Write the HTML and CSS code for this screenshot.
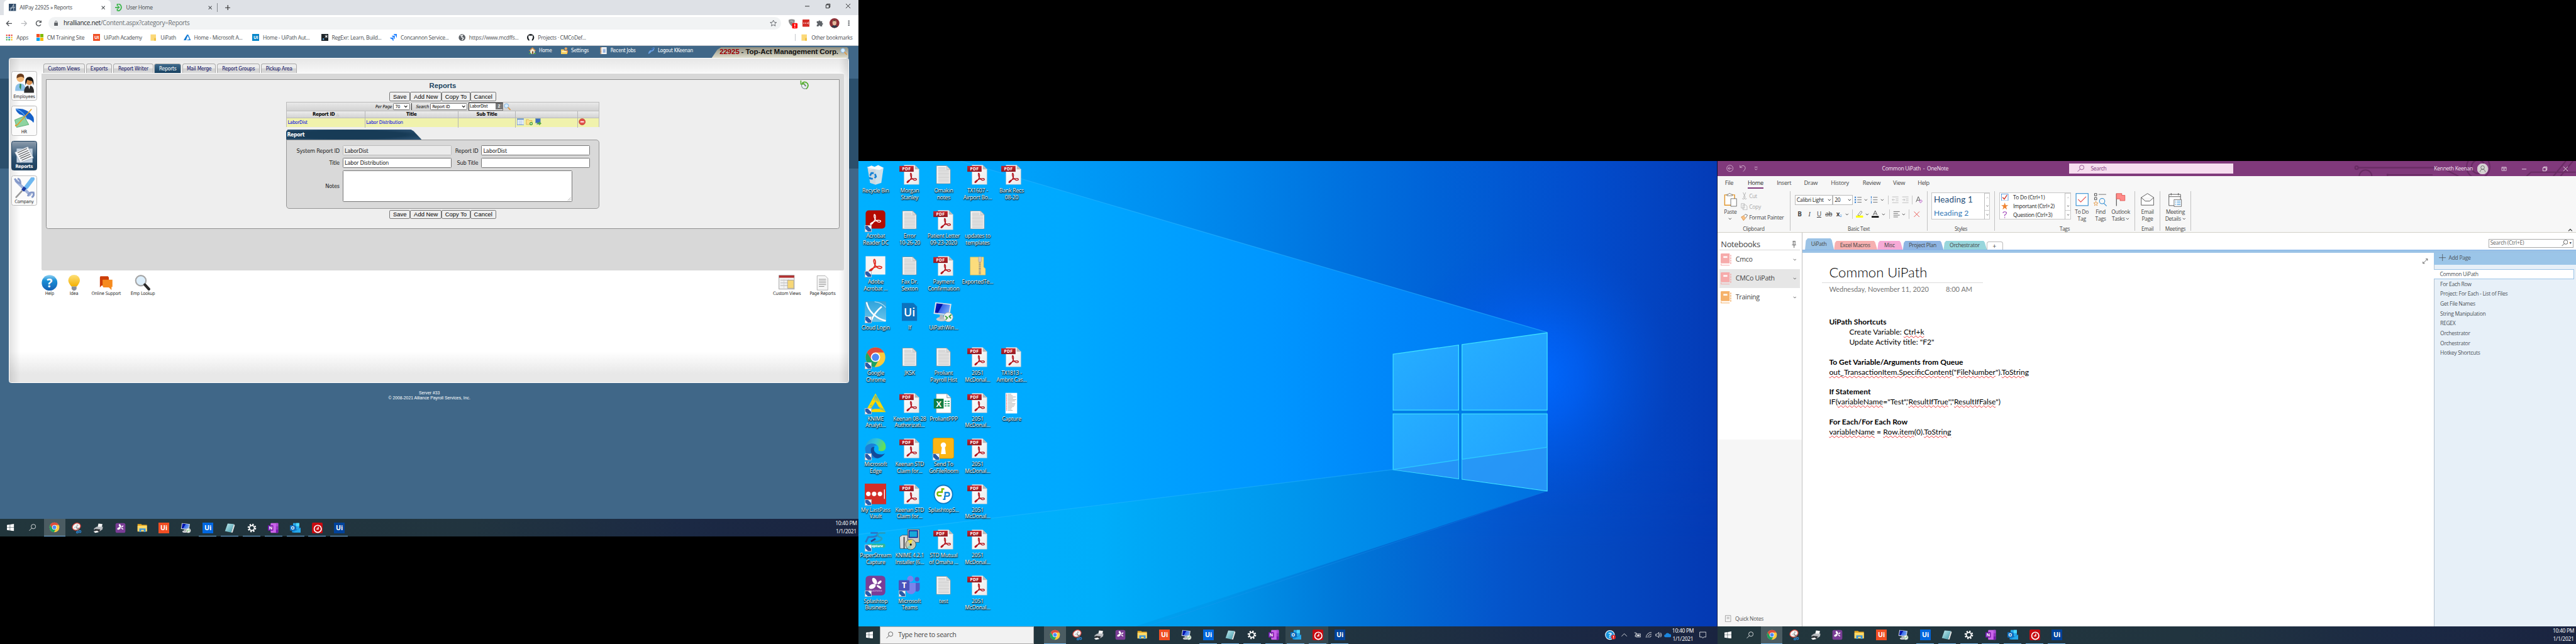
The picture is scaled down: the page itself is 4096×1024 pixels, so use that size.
FILE: index.html
```html
<!DOCTYPE html>
<html lang="en">
<head>
<meta charset="utf-8">
<title>Desktop</title>
<link rel="stylesheet" href="styles.css">
</head>
<body>
<svg class="defs" aria-hidden="true">
<defs>
<linearGradient id="gRed" x2="0" y2="1"><stop offset="0" stop-color="#c9252d"/><stop offset="1" stop-color="#8e1a22"/></linearGradient>
<linearGradient id="gPaper" x2="1" y2="1"><stop offset="0" stop-color="#fff"/><stop offset="1" stop-color="#e9e9e9"/></linearGradient>
<linearGradient id="gScreen" x2="1" y2=".4"><stop offset="0" stop-color="#0a20c8"/><stop offset=".45" stop-color="#0010a0"/><stop offset=".5" stop-color="#3a68e8"/><stop offset="1" stop-color="#6fa0f4"/></linearGradient>
<linearGradient id="gHelp" x2="0" y2="1"><stop offset="0" stop-color="#8fd0f2"/><stop offset=".35" stop-color="#1a8fd6"/><stop offset="1" stop-color="#1560b4"/></linearGradient>
<linearGradient id="gBulb" x2="0" y2="1"><stop offset="0" stop-color="#fde07a"/><stop offset="1" stop-color="#f4b000"/></linearGradient>
<linearGradient id="gEdge" x2="1" y2=".3"><stop offset="0" stop-color="#1a9fe0"/><stop offset=".55" stop-color="#33c3d8"/><stop offset="1" stop-color="#62e05a"/></linearGradient>
<linearGradient id="gX" x2="0" y2="1"><stop offset="0" stop-color="#2fa3dc"/><stop offset="1" stop-color="#6cc4ea"/></linearGradient>
<linearGradient id="gNote" x2="1" y2="1"><stop offset="0" stop-color="#c4ecf0"/><stop offset="1" stop-color="#3f98a8"/></linearGradient>
</defs>
</svg>
<svg class="symbols" aria-hidden="true">
<symbol id="win" viewBox="0 0 16 16"><path d="M0 2.3 6.5 1.4V7.6H0zM7.3 1.3 16 0V7.6H7.3zM0 8.4H6.5V14.6L0 13.7zM7.3 8.4H16V16L7.3 14.7z" fill="#fff"/></symbol>
<symbol id="mag" viewBox="0 0 16 16"><circle cx="10" cy="6" r="5" fill="none" stroke="currentColor" stroke-width="1.1"/><path d="M6.4 9.6 .8 15.2" stroke="currentColor" stroke-width="1.2"/></symbol>
<symbol id="magc" viewBox="0 0 16 16"><circle cx="6" cy="6" r="4.8" fill="#d6ecfb" stroke="#7fb0e0" stroke-width="1.4"/><path d="M10 10 14.4 15" stroke="#d99a4e" stroke-width="2.6" stroke-linecap="round"/></symbol>
<symbol id="chrome" viewBox="0 0 48 48"><circle cx="24" cy="24" r="22" fill="#fccb3c"/><path d="M5 13A22 22 0 0 0 22 46L32 29 24 24 15 29z" fill="#1da362"/><path d="M24 13.500H43.400A22 22 0 0 0 5 13L14.800 29z" fill="#dd4b3e"/><circle cx="24" cy="24" r="10.500" fill="#fff"/><circle cx="24" cy="24" r="8.200" fill="#4c8bf5"/></symbol>
<symbol id="snip" viewBox="0 0 24 24"><ellipse cx="12" cy="9" rx="9.500" ry="7.500" transform="rotate(-28 12 9)" fill="#f4f4f4" stroke="#d8443c" stroke-width="1.800"/><path d="M7 12 17 5M14 3 12 14" stroke="#999" stroke-width="1"/><path d="M12 10 19 19M17 11 14 20" stroke="#777" stroke-width="1.500"/><circle cx="20" cy="20" r="2.200" fill="none" stroke="#2a86d8" stroke-width="1.700"/><circle cx="14" cy="21.500" r="2" fill="none" stroke="#2a86d8" stroke-width="1.700"/></symbol>
<symbol id="printer" viewBox="0 0 24 24"><path d="M12 2 21 3 19 12 10 11z" fill="#f5f5f5"/><path d="M2 13 8 9H22L21 15 14 20H3z" fill="#b9bcc0"/><path d="M4 14 16 15 14 21 2 19z" fill="#2f3236"/><path d="M1 20 9 18 13 21 5 23z" fill="#fff"/></symbol>
<symbol id="splash" viewBox="0 0 48 48"><rect x="2" y="2" width="44" height="44" rx="8" fill="#7a3d96"/><g fill="#fff"><ellipse cx="22" cy="14" rx="4.500" ry="8" transform="rotate(-30 22 14)"/><ellipse cx="33" cy="17" rx="5.500" ry="2.600" transform="rotate(-40 33 17)"/><ellipse cx="17" cy="26" rx="8" ry="5" transform="rotate(-25 17 26)"/><ellipse cx="32" cy="27" rx="6" ry="2.400" transform="rotate(35 32 27)"/></g></symbol>
<symbol id="folder" viewBox="0 0 24 24"><path d="M1 3H9L11 5H22V19H1z" fill="#e8a820"/><path d="M1 7H22V20H1z" fill="#ffd968"/><path d="M5 21V13H19V21H15V16H9V21z" fill="#3b94d9"/></symbol>
<symbol id="rdp" viewBox="0 0 48 48"><path d="M6 2 42 6 38 32 2 28z" fill="#dfe3e8"/><path d="M8.500 4.500 39 8 35.500 29 5 25.500z" fill="url(#gScreen)"/><ellipse cx="20" cy="40" rx="12" ry="5" fill="#c9ccd0"/><path d="M16 30 24 31 23 40H15z" fill="#b5b8bc"/><circle cx="35" cy="35.500" r="10.500" fill="#eef0ee" stroke="#9a9a9a"/><path d="M28 33 33 37 29 41.500M42 30 37 34 41 38.500" stroke="#3da23a" stroke-width="2.600" fill="none"/></symbol>
<symbol id="uio" viewBox="0 0 24 24"><rect width="24" height="24" fill="#f04e23"/><text x="12" y="17.500" class="ui-mark">Ui</text></symbol>
<symbol id="uib" viewBox="0 0 24 24"><rect width="24" height="24" fill="#0067df"/><text x="12" y="17.500" class="ui-mark">Ui</text></symbol>
<symbol id="uid" viewBox="0 0 24 24"><rect width="24" height="24" fill="#00429a"/><text x="12" y="17.500" class="ui-mark">Ui</text></symbol>
<symbol id="uic" viewBox="0 0 24 24"><rect width="24" height="24" fill="#0585c8"/><text x="12" y="17.500" class="ui-mark">Ui</text></symbol>
<symbol id="uif" viewBox="0 0 48 48"><path d="M7 4H33L41 12V44H7z" fill="#0c72bd"/><text x="24" y="34" class="ui-mark big-mark">Ui</text></symbol>
<symbol id="notepad" viewBox="0 0 24 24"><path d="M7 2 21 3 15 22 1 19z" fill="url(#gNote)"/><path d="M21 3 23 6 18 22 15 22z" fill="#e8e8e8"/></symbol>
<symbol id="gear" viewBox="0 0 24 24"><circle cx="12" cy="12" r="5.500" fill="none" stroke="#fff" stroke-width="2.400"/><circle cx="12" cy="12" r="8" fill="none" stroke="#fff" stroke-width="3.200" stroke-dasharray="3.200 3.080"/></symbol>
<symbol id="onenote" viewBox="0 0 24 24"><rect x="6" y="1" width="17" height="22" rx="1.500" fill="#ca64ea"/><path d="M18 1H23V8H18z" fill="#ae4bd5"/><path d="M18 8H23V15H18z" fill="#9332bf"/><path d="M18 15H23V23H18z" fill="#7719aa"/><rect y="6" width="12" height="12" rx="1" fill="#7719aa"/><text x="6" y="15.300" class="letter">N</text></symbol>
<symbol id="outlook" viewBox="0 0 24 24"><rect x="7" y="1" width="14" height="15" fill="#28a8ea"/><path d="M14 1H21V8H14z" fill="#50d9ff"/><path d="M7 8H14V16H7z" fill="#0364b8"/><path d="M4 11 14 17 24 11V22H5z" fill="#1490df"/><path d="M24 12V22H7z" fill="#28a8ea"/><rect y="6" width="12" height="12" rx="1" fill="#0f6cbd"/><text x="6" y="15.300" class="letter">O</text></symbol>
<symbol id="redclock" viewBox="0 0 24 24"><rect width="24" height="24" rx="3" fill="#c80a10"/><circle cx="13" cy="14" r="8" fill="none" stroke="#fff" stroke-width="2.400"/><path d="M14 9V14.500H10" stroke="#fff" stroke-width="2" fill="none"/></symbol>
<symbol id="curl" viewBox="0 0 48 48"><path d="M6 40C18 36 27 20 23 8C20 1 16 9 22 21C27 31 37 35 42 31C46 26 34 24 22 29C12 33 4 38 6 41C9 44 17 34 22 24" fill="none" stroke="currentColor" stroke-width="3.200"/></symbol>
<symbol id="pdf" viewBox="0 0 48 48"><path d="M12 2H36L45.500 11.500V45.500H12z" fill="url(#gPaper)" stroke="#b9c4cc" stroke-width=".6"/><path d="M36 2V11.500H45.500z" fill="#b8b8b8"/><rect x="1.500" y="4" width="32" height="13" fill="url(#gRed)"/><text x="17.500" y="14.200" class="pdf-mark">PDF</text><use href="#curl" x="15" y="17" width="28" height="28" color="#b3141d"/></symbol>
<symbol id="txt" viewBox="0 0 48 48"><path d="M8.500 3.500H31L39.500 12V43.500H8.500z" fill="#f8f8f8" stroke="#8a8a8a"/><path d="M31 3.500V12H39.500z" fill="#dcdcdc" stroke="#999" stroke-width=".7"/><path d="M12 8H29M12 11H29M12 14.200H37M12 17.400H37M12 20.600H37M12 23.800H37M12 27H37M12 30.200H37M12 33.400H37M12 36.600H37M12 39.800H37" stroke="#a4a4a4" stroke-width="1.100"/></symbol>
<symbol id="recycle" viewBox="0 0 48 48"><path d="M6 6 42 8 37 42 24 46 12 42z" fill="#dfe5e9" opacity=".93"/><path d="M6 7 15 3 22 6 30 2 42 8 33 13 20 11 12 13z" fill="#fbfbfb"/><path d="M24 12 24 45 12 42 6 7z" fill="#c3ccd2" opacity=".45"/><g fill="none" stroke="#1583d6" stroke-width="4"><path d="M12 26 15 20 20 20M23 22 25 28 22 31M18 33 12 32 11 29"/></g></symbol>
<symbol id="acro" viewBox="0 0 48 48"><rect x="2" y="2" width="44" height="41" rx="7" fill="#b30b00"/><use href="#curl" x="9" y="8" width="30" height="30" color="#fff"/></symbol>
<symbol id="adobe" viewBox="0 0 48 48"><rect x="2" y="2" width="44" height="41" fill="#f5f5f5"/><use href="#curl" x="6" y="5" width="36" height="36" color="#e02a20"/></symbol>
<symbol id="cloudx" viewBox="0 0 48 48"><rect width="48" height="46" rx="3" fill="url(#gX)"/><path d="M4 2C8 22 24 38 47 44M38 12C28 20 20 30 14 44" fill="none" stroke="#fff" stroke-width="3.500"/><path d="M22 1C34 2 42 8 47 14" fill="none" stroke="#bfe4f6" stroke-width="1.500"/></symbol>
<symbol id="knime" viewBox="0 0 48 48"><path d="M24 2 47 44H1z" fill="#fdd800"/><path d="M24 6 20 18M24 8 24 19M25 8 28 20M26 8 32 22M28 34 46 42M27 31 43 38M12 40 22 36M8 42 18 30M12 30 16 28" stroke="#4fb0b0" stroke-width="1.300"/><path d="M24 20 34 37H14z" fill="#18b0f4"/></symbol>
<symbol id="edge" viewBox="0 0 48 48"><path d="M1 22C3 8 14 0 26 1C40 2 48 12 47 22C46 30 36 32 30 28C33 24 30 15 22 14C12 13 4 18 1 22z" fill="url(#gEdge)"/><path d="M1 22C6 12 22 10 27 18C18 16 15 24 19 32C22 40 32 42 40 38C34 46 22 49 12 43C3 38 0 30 1 22z" fill="#1c7fd6"/><path d="M14 25C12 34 18 44 28 46C36 45 42 40 45 35C38 39 28 38 23 32C20 29 20 24 22 20C17 20 15 22 14 25z" fill="#124a98"/></symbol>
<symbol id="lastpass" viewBox="0 0 48 48"><rect width="48" height="46" fill="#d32d27"/><circle cx="8" cy="23" r="5" fill="#fff"/><circle cx="21" cy="23" r="5" fill="#fff"/><circle cx="34" cy="23" r="5" fill="#fff"/><path d="M44 13V34" stroke="#fff" stroke-width="1.800"/></symbol>
<symbol id="paper" viewBox="0 0 48 48"><path d="M13 9H28C31 15 24 18 14 18H8L2 30" fill="none" stroke="#2c77c8" stroke-width="4"/><path d="M46 9H34C26 10 28 18 36 19C42 22 34 29 20 29" fill="none" stroke="#2a9bbb" stroke-width="3.500"/><path d="M14 28 24 22" stroke="#31408c" stroke-width="4"/><rect x="6" y="33" width="40" height="9" rx="4" fill="#2fb79a"/><text x="28" y="40.500" class="cap-mark">apture</text></symbol>
<symbol id="splash2" viewBox="0 0 48 48"><use href="#splash"/><text x="24" y="38" class="cap-mark biz">business</text></symbol>
<symbol id="excel" viewBox="0 0 48 48"><path d="M8 3H32L41 12V46H8z" fill="#fff" stroke="#888" stroke-width=".8"/><path d="M32 3V12H41" fill="#eee" stroke="#777"/><rect x="2.500" y="14" width="22" height="22" fill="#107c41"/><text x="13.500" y="32" class="xl-mark">X</text><path d="M27 20H31M33 20H38M27 25H31M33 25H38M27 30H31M33 30H38" stroke="#21a366" stroke-width="2.500"/></symbol>
<symbol id="keyhole" viewBox="0 0 48 48"><rect x=".5" y=".5" width="47" height="46" rx="5" fill="#fdb515" stroke="#c98700"/><circle cx="24" cy="16.500" r="6" fill="#fff"/><path d="M21 18H27L29.500 36.500H18.500z" fill="#fff"/></symbol>
<symbol id="sps" viewBox="0 0 48 48"><circle cx="24" cy="24" r="20.500" fill="#fff" stroke="#0e78c0" stroke-width="2.500"/><g fill="none" stroke-width="3.400"><path d="M26 12H21V19H13C9 20 10 28 14 27H20" stroke="#7ab800"/><path d="M23 35H27V28H34C39 27 38 20 34 20H28V26" stroke="#1a87d8"/></g></symbol>
<symbol id="inst" viewBox="0 0 48 48"><path d="M20 1H46V30H38L20 24z" fill="#c8c8c8" stroke="#222" stroke-width=".8"/><rect x="23" y="4" width="19" height="15" fill="#18a8d8" stroke="#0a1a90" stroke-width="2"/><path d="M2 18 8 14H20V44H3z" fill="#dadada" stroke="#222" stroke-width=".8"/><path d="M12 18V44" stroke="#222" stroke-width="2"/><circle cx="27" cy="35" r="11.500" fill="#c9c9b0" stroke="#333"/><path d="M27 35 20 26 31 24z" fill="#f0e040"/><path d="M27 35 18 42 26 46z" fill="#7fd0c8"/><circle cx="27" cy="35" r="2.200" fill="#111"/></symbol>
<symbol id="teams" viewBox="0 0 48 48"><circle cx="26" cy="9" r="7" fill="#7b83eb"/><circle cx="41" cy="10" r="5" fill="#5059c9"/><path d="M35 18H47V32C46 38 40 39 36 36z" fill="#5059c9"/><path d="M16 18H38V34C36 46 20 46 17 36z" fill="#7b83eb"/><rect x="0" y="12" width="24" height="23" rx="2" fill="#4b53bc"/><text x="12" y="30" class="tm-mark">T</text></symbol>
<symbol id="capture" viewBox="0 0 48 48"><rect x="11" y="1" width="26" height="46" fill="#fff"/><path d="M16 4H24M16 7H27M16 10H34M16 13H28M16 16H35M16 19H32M16 22H26M16 25H33M16 28H32M16 31H30M16 34H26M16 37H24M16 40H27" stroke="#999" stroke-width="1.100"/><path d="M13.500 3V42" stroke="#d33" stroke-width="1.500" stroke-dasharray="1.600 1.400"/></symbol>
<symbol id="zip" viewBox="0 0 48 48"><path d="M8 4H38V26L42 30V44H8z" fill="#fcdc7c" stroke="#e5bd4e" stroke-width=".8"/><path d="M29.500 4V44" stroke="#888" stroke-width="4.500" stroke-dasharray="1.200 1"/><rect x="26.500" y="3" width="6.500" height="12" rx="2" fill="#c9c9c9" stroke="#888" stroke-width=".6"/></symbol>
<symbol id="book" viewBox="0 0 24 28"><path d="M2 0H20V22H2Q0 22 0 20V2Q0 0 2 0z" fill="currentColor"/><path d="M1 23V26.500H20" fill="none" stroke="currentColor" stroke-width="1.500"/><rect x="6" y="6" width="9" height="4" fill="#fff" opacity=".9"/><path d="M22.500 3V24" stroke="currentColor" stroke-width="2" stroke-dasharray="4 1.500"/></symbol>
<symbol id="chev" viewBox="0 0 8 8"><path d="M1 2.500 4 5.500 7 2.500" fill="none" stroke="currentColor" stroke-width="1.300"/></symbol>
<symbol id="bfold" viewBox="0 0 16 16"><path d="M2 1H14V15H2z" fill="#fbd878"/><path d="M10 9H14V15H10z" fill="#f0c040"/></symbol>
<symbol id="globe" viewBox="0 0 16 16"><circle cx="8" cy="8" r="7.500" fill="#5f6368"/><path d="M4 4 9 3 7 7 11 9 8 14" stroke="#fff" stroke-width="1.800" fill="none"/></symbol>
</svg>

<main class="screens">

<section class="monitor left">
  <div class="tabstrip">
    <div class="tab active"><svg class="i16" viewBox="0 0 16 16"><rect width="16" height="16" fill="#2f4a68"/><path d="M3 15 11 1V15M2 10 14 8" stroke="#cdd7e2" stroke-width="1.300" fill="none"/></svg><span>AllPay 22925 » Reports</span><svg class="x" viewBox="0 0 10 10"><path d="M1 1 9 9M9 1 1 9"/></svg></div>
    <div class="tab"><svg class="i16" viewBox="0 0 16 16"><path d="M6 0A8 8 0 0 1 6 16M5 0V5M5 11V16" fill="none" stroke="#3bb54a" stroke-width="2.500"/><path d="M0 7H6V4L11 8 6 12V9.500H0z" fill="#3bb54a"/></svg><span>User Home</span><svg class="x" viewBox="0 0 10 10"><path d="M1 1 9 9M9 1 1 9"/></svg></div>
    <svg class="plus" viewBox="0 0 12 12"><path d="M6 0V12M0 6H12"/></svg>
    <div class="winctl">
      <svg viewBox="0 0 10 10"><path d="M0 5.500H10"/></svg>
      <svg viewBox="0 0 10 10"><path d="M.5 2.500H7.500V9.500H.5zM2.500 2.500V.5H9.500V7.500H7.500"/></svg>
      <svg viewBox="0 0 10 10"><path d="M0 0 10 10M10 0 0 10"/></svg>
    </div>
  </div>
  <div class="toolbar">
    <svg class="nav" viewBox="0 0 16 16"><path d="M15 8H2M8 2 2 8 8 14"/></svg>
    <svg class="nav faint" viewBox="0 0 16 16"><path d="M1 8H14M8 2 14 8 8 14"/></svg>
    <svg class="nav" viewBox="0 0 16 16"><path d="M13.500 10.500A6 6 0 1 1 13 4M14 1V5.500H9.500"/></svg>
    <div class="omni"><svg class="lock" viewBox="0 0 10 14"><rect y="5" width="10" height="8.500" rx="1" fill="#5f6368"/><path d="M2.500 5V3A2.500 2.500 0 0 1 7.500 3V5" fill="none" stroke="#5f6368" stroke-width="1.500"/></svg><span class="url">hralliance.net<i>/Content.aspx?category=Reports</i></span><svg class="i16 star" viewBox="0 0 16 16"><path d="M8 1.500 10 6 15 6.500 11.200 9.800 12.400 14.500 8 12 3.600 14.500 4.800 9.800 1 6.500 6 6z" fill="none" stroke="#5f6368" stroke-width="1.300"/></svg></div>
    <svg class="ext" viewBox="0 0 22 22"><path d="M4 4Q11 0 18 4Q18 14 11 18Q4 12 4 4z" fill="#8d8d8d"/><path d="M8 7Q12 5 14 8V13" stroke="#ddd" fill="none"/><rect x="12" y="11" width="12" height="12" rx="2" fill="#f00"/><path d="M18 13V18M18 19.500V21" stroke="#fff" stroke-width="2"/></svg>
    <svg class="i16" viewBox="0 0 16 16"><rect width="16" height="16" rx="1" fill="#d32d27"/><path d="M2 8H4M6 8H8M10 8H12" stroke="#fff" stroke-width="2"/><path d="M13.500 5V11" stroke="#fff"/></svg>
    <svg class="i16" viewBox="0 0 16 16"><path d="M1 4H5A2 2 0 1 1 9 4H13V8A2 2 0 1 1 13 12V15.500H9A2 2 0 0 0 5 15.500H1V12A2 2 0 0 0 1 8z" fill="#5f6368"/></svg>
    <svg class="ava" viewBox="0 0 22 22"><circle cx="11" cy="11" r="11" fill="#8e3038"/><path d="M4 19Q11 12 18 19Q11 24 4 19" fill="#2c3a4a"/><ellipse cx="11" cy="10" rx="4.500" ry="6" fill="#e3b79c"/><path d="M6.500 8Q11 -1 15.500 8Q11 4 6.500 8" fill="#4a3024"/></svg>
    <svg class="i16" viewBox="0 0 16 16"><path d="M8 2V5M8 6.500V9.500M8 11V14" stroke="#5f6368" stroke-width="3"/></svg>
  </div>
  <div class="bookmarks">
    <a><svg class="i16" viewBox="0 0 16 16"><path d="M1 3H4M6 3H10M12 3H15" stroke="#e8453c" stroke-width="3"/><path d="M1 8H4" stroke="#34a853" stroke-width="3"/><path d="M6 8H10" stroke="#4285f4" stroke-width="3"/><path d="M12 8H15" stroke="#fbbc05" stroke-width="3"/><path d="M1 13H4M6 13H10" stroke="#34a853" stroke-width="3"/><path d="M12 13H15" stroke="#fbbc05" stroke-width="3"/></svg>Apps</a>
    <a><svg class="i16" viewBox="0 0 16 16"><path d="M0 0H7.500V7.500H0z" fill="#f25022"/><path d="M8.500 0H16V7.500H8.500z" fill="#7fba00"/><path d="M0 8.500H7.500V16H0z" fill="#00a4ef"/><path d="M8.500 8.500H16V16H8.500z" fill="#ffb900"/></svg>CM Training Site</a>
    <a><svg class="i16"><use href="#uio"/></svg>UiPath Academy</a>
    <a><svg class="i16"><use href="#bfold"/></svg>UiPath</a>
    <a><svg class="i16" viewBox="0 0 16 16"><path d="M8 1 4 7 0 14H5L10 2zM9 3 13 12 5 14H16L10 1z" fill="#0f78d4"/></svg>Home - Microsoft A...</a>
    <a><svg class="i16"><use href="#uic"/></svg>Home - UiPath Aut...</a>
    <a><svg class="i16" viewBox="0 0 16 16"><rect width="16" height="16" fill="#1e2429"/><rect x="3" y="10" width="3" height="3" fill="#5fb4f0"/><path d="M11 2V9M8 3.500 14 7.500M14 3.500 8 7.500" stroke="#fff" stroke-width="1.200"/></svg>RegExr: Learn, Build...</a>
    <a><svg class="i16" viewBox="0 0 16 16"><path d="M8 0H16V9Q14 8 13 4Q9 3 8 0zM4 4H11V12Q9 11 9 8Q5 7 4 4zM0 8H8V16Q6 15 5 12Q1 11 0 8z" fill="#2684ff"/></svg>Concannon Service...</a>
    <a><svg class="i16"><use href="#globe"/></svg>https://www.mcdffs...</a>
    <a><svg class="i16" viewBox="0 0 16 16"><circle cx="8" cy="8" r="8" fill="#1b1f23"/><path d="M5 16V12Q3 11 3 7L3.500 3 6 4H10L12.500 3 13 7Q13 11 11 12V16z" fill="#fff"/></svg>Projects · CMCoDef...</a>
    <a class="other"><svg class="i16"><use href="#bfold"/></svg>Other bookmarks</a>
  </div>

  <div class="site">
    <div class="sitehead">
      <a><svg class="i16" viewBox="0 0 16 16"><path d="M8 1 1 8H3V15H13V8H15z" fill="#f3e8d2"/><path d="M8 0 0 8 1.500 9 8 3 14.500 9 16 8z" fill="#c98842"/><path d="M7 9H10V15H7z" fill="#7a5230"/><path d="M0 13H5V16H0zM11 13H16V16H11z" fill="#4aa048"/></svg>Home</a>
      <a><svg class="i16" viewBox="0 0 16 16"><circle cx="11" cy="3.500" r="3" fill="#e8a860"/><path d="M6 7H16V13H6z" fill="#d8704a"/><path d="M0 5H6L8 8H14V16H0z" fill="#f6cf5c"/><path d="M2 10H12" stroke="#fff" stroke-width="1.500"/></svg>Settings</a>
      <a><svg class="i16" viewBox="0 0 16 16"><rect x="1" width="14" height="16" fill="#f4f4f4"/><path d="M2 0V16" stroke="#b06a32" stroke-width="2.500" stroke-dasharray="1.500 1"/><rect x="6" y="3" width="7" height="10" fill="#cfe0f6"/><path d="M7 6H12M7 8.500H12M7 11H12" stroke="#3c6cb8"/></svg>Recent Jobs</a>
      <a><svg class="i16" viewBox="0 0 16 16"><path d="M1 14Q3 6 8 7Q9 0 15 1Q15 9 8 10Q6 14 2 15z" fill="#6a9fe0"/><path d="M8 7 13 2" stroke="#3465a8" stroke-width="2.500"/></svg>Logout KKeenan</a>
      <div class="company"><b>22925</b><span>- Top-Act Management Corp.</span><svg class="i16"><use href="#magc"/></svg></div>
    </div>
    <div class="panel">
      <nav class="side">
        <a><svg viewBox="0 0 44 44"><path d="M3 38Q2 22 14 22Q26 22 25 38z" fill="#8cc0e8"/><path d="M13 22 16 24 15 36 12 30z" fill="#2e8a50"/><circle cx="14" cy="11" r="8" fill="#f2b878"/><path d="M6 11Q5 1 15 1Q23 2 22 11Q17 4 6 11" fill="#6a3d1e"/><path d="M22 42Q21 27 33 26Q44 27 43 42z" fill="#2d2d2d"/><circle cx="33" cy="18" r="7" fill="#d98f4c"/><path d="M25 26Q22 8 34 8Q44 9 42 26L39 17Q32 16 29 14z" fill="#171717"/><path d="M31 26 35 26 33 34z" fill="#fff"/></svg>Employees</a>
        <a><svg viewBox="0 0 44 44"><path d="M2 26 22 18 32 36 6 42z" fill="#8ed4a0" stroke="#3f9a60"/><path d="M4 2Q30 0 42 20Q44 28 42 32Q36 24 28 24Q22 16 12 14Q4 8 4 2z" fill="#1560c8"/><path d="M4 2Q20 8 28 24" stroke="#6ab0f4" stroke-width="2" fill="none"/><path d="M38 3 8 36Q2 42 4 36" stroke="#e0a030" stroke-width="2" fill="none"/></svg>HR</a>
        <a class="on"><svg viewBox="0 0 44 44"><path d="M6 12H40V42H6z" fill="#c5d3e2"/><path d="M2 20 30 8 42 32 14 42z" fill="#f2f5f8" stroke="#9aa8b8"/><path d="M8 21 28 12M10 25 31 16M12 29 33 20M14 33 35 24M17 37 37 28" stroke="#555" stroke-width="1.500"/></svg>Reports</a>
        <a><svg viewBox="0 0 44 44"><path d="M4 6 36 38" stroke="#9fb2da" stroke-width="6"/><path d="M2 2Q6 12 14 12Q14 4 8 2M30 40Q32 30 42 32Q44 40 38 42" fill="none" stroke="#8498c8" stroke-width="4"/><path d="M40 3 27 20" stroke="#6fb8f0" stroke-width="9" stroke-linecap="round"/><path d="M24 21 19 28" stroke="#1a3aa0" stroke-width="7"/><path d="M18 28 4 43" stroke="#9a9a9a" stroke-width="3.500"/></svg>Company</a>
      </nav>
      <div class="content">
        <div class="subtabs"><a>Custom Views</a><a>Exports</a><a>Report Writer</a><a class="on">Reports</a><a>Mail Merge</a><a>Report Groups</a><a>Pickup Area</a></div>
        <div class="frame">
          <div class="sheet">
            <svg class="history" viewBox="0 0 20 20"><circle cx="11" cy="11" r="7.500" fill="#e9f0f2" stroke="#7a8a90" stroke-width="1.500"/><path d="M11 7V12H14" stroke="#333" fill="none" stroke-width="1.300"/><path d="M2 0V8H9L6 5Q12 1 17 7Q20 14 14 19" fill="none" stroke="#55b02c" stroke-width="2.300"/></svg>
            <h1>Reports</h1>
            <div class="btns"><button>Save</button><button>Add New</button><button>Copy To</button><button>Cancel</button></div>
            <div class="grid">
              <div class="finder"><i>Per Page</i><span class="sel">70<svg><use href="#chev"/></svg></span><i>Search</i><span class="sel">Report ID<svg><use href="#chev"/></svg></span><span class="find">LaborDist<em>2</em></span><svg class="i16"><use href="#magc"/></svg></div>
              <div class="row head"><span>Report ID <small>△</small></span><span>Title</span><span>Sub Title</span><span></span><span></span></div>
              <div class="row data"><a>LaborDist</a><a>Labor Distribution</a><span></span>
                <span class="acts"><svg class="i16" viewBox="0 0 16 16"><rect x=".5" y="1" width="15" height="14" fill="#fff" stroke="#5b8ac8"/><path d="M1 2.500H15" stroke="#5b8ac8" stroke-width="2"/><path d="M3 6H13M3 8.500H13M3 11H13M3 13.300H13" stroke="#8ab0de"/></svg><svg class="i16" viewBox="0 0 16 16"><path d="M1 3H6L8 5H14V14H1z" fill="#fbe08a" stroke="#d8a840"/><circle cx="12" cy="12" r="3.700" fill="#54a83c"/><path d="M12 10V14M10 12H14" stroke="#fff"/></svg><svg class="i16" viewBox="0 0 16 16"><rect x="2" y=".5" width="11" height="10" fill="#3c6cc0" stroke="#8aa"/><path d="M5 11H10V14H4z" fill="#9ab"/><path d="M6 10H10V7L15.500 11.500 10 16V13H6z" fill="#54a83c"/></svg></span>
                <span class="acts"><svg class="i16" viewBox="0 0 16 16"><circle cx="8" cy="8" r="7" fill="#e2504a" stroke="#b83830"/><path d="M4 8H12" stroke="#fff" stroke-width="2.500"/></svg></span></div>
            </div>
            <div class="formtab">Report</div>
            <div class="form">
              <label>System Report ID</label><span class="field off">LaborDist</span><label>Report ID</label><span class="field">LaborDist</span>
              <label>Title</label><span class="field">Labor Distribution</span><label>Sub Title</label><span class="field"></span>
              <label>Notes</label><span class="field area"><svg viewBox="0 0 8 8"><path d="M0 8 8 0M4 8 8 4" stroke="#777" stroke-width=".8"/></svg></span>
            </div>
            <div class="btns"><button>Save</button><button>Add New</button><button>Copy To</button><button>Cancel</button></div>
          </div>
        </div>
        <div class="dock">
          <a><svg viewBox="0 0 36 36"><circle cx="18" cy="18" r="17.500" fill="url(#gHelp)"/><text x="18" y="28" class="q-mark">?</text></svg>Help</a>
          <a><svg viewBox="0 0 36 36"><path d="M5 12A13 12 0 0 1 31 12Q31 18 24 26H12Q5 18 5 12z" fill="url(#gBulb)"/><path d="M12.500 26H23.500V32L20 35H16L12.500 32z" fill="#8a8f98"/></svg>Idea</a>
          <a><svg viewBox="0 0 36 36"><path d="M5 3H22L24 6V24H8L4 28V6z" fill="#cc3d08"/><path d="M10 11H32V27H30V34L24 28H12Q10 27 10 24z" fill="#f68b1e"/></svg>Online Support</a>
          <a><svg viewBox="0 0 36 36"><circle cx="14" cy="13" r="11.500" fill="#dceefb" stroke="#a6a6a6" stroke-width="3"/><path d="M23 22 32 32" stroke="#2a2a2a" stroke-width="6" stroke-linecap="round"/></svg>Emp Lookup</a>
          <span></span>
          <a><svg viewBox="0 0 36 36"><rect x="1" y="1" width="34" height="31" fill="#f2f2f2" stroke="#888"/><path d="M1 4H35" stroke="#b03030" stroke-width="5"/><path d="M4 12H32M4 18H32M4 24H32" stroke="#c9c9c9" stroke-width="2"/><path d="M12 10V30M22 10V30" stroke="#c9c9c9"/><path d="M20 12H34V30H20z" fill="#f7d777" stroke="#999"/></svg>Custom Views</a>
          <a><svg viewBox="0 0 36 36"><path d="M6 2H24L30 8V34H6z" fill="#f7f7f7" stroke="#999"/><path d="M10 10H26M10 14H26M10 18H26M10 22H26M10 26H22" stroke="#888" stroke-width="1.300"/></svg>Page Reports</a>
        </div>
      </div>
    </div>
    <p class="foot">Server #33<br>© 2008-2021 Alliance Payroll Services, Inc.</p>
  </div>

  <div class="taskbar">
    <a><svg class="w"><use href="#win"/></svg></a><a><svg class="w"><use href="#mag"/></svg></a>
    <a class="cur"><svg><use href="#chrome"/></svg></a><a><svg><use href="#snip"/></svg></a><a><svg><use href="#printer"/></svg></a><a><svg><use href="#splash"/></svg></a><a><svg><use href="#folder"/></svg></a><a><svg><use href="#uio"/></svg></a><a><svg><use href="#rdp"/></svg></a>
    <a class="open"><svg><use href="#uib"/></svg></a><a class="open"><svg><use href="#notepad"/></svg></a><a class="open"><svg><use href="#gear"/></svg></a><a class="open"><svg><use href="#onenote"/></svg></a><a class="open"><svg><use href="#outlook"/></svg></a><a class="open"><svg><use href="#redclock"/></svg></a><a class="open"><svg><use href="#uid"/></svg></a>
    <div class="clock">10:40 PM<br>1/1/2021</div>
  </div>
</section>

<section class="monitor mid">
  <svg class="wallpaper" viewBox="0 0 1920 1080" preserveAspectRatio="none">
    <defs>
      <linearGradient id="wb"><stop offset="0" stop-color="#00a9fd"/><stop offset=".2" stop-color="#00a0f9"/><stop offset=".36" stop-color="#008ff1"/><stop offset=".52" stop-color="#0078e2"/><stop offset=".66" stop-color="#0064d8"/><stop offset=".84" stop-color="#024dcd"/><stop offset="1" stop-color="#043bb6"/></linearGradient>
      <linearGradient id="wm"><stop offset="0" stop-color="#00b0ff"/><stop offset=".3" stop-color="#00a9ff"/><stop offset=".6" stop-color="#0096ff"/><stop offset=".8" stop-color="#0084f8"/><stop offset="1" stop-color="#0078f0"/></linearGradient>
      <linearGradient id="wl" gradientUnits="userSpaceOnUse" x1="0" y1="0" x2="1540" y2="0"><stop offset="0" stop-color="#00b3ff"/><stop offset=".35" stop-color="#00aefa"/><stop offset=".6" stop-color="#0099ee"/><stop offset="1" stop-color="#0070e0"/></linearGradient>
      <linearGradient id="wd" gradientUnits="userSpaceOnUse" x1="300" y1="0" x2="1900" y2="0"><stop offset="0" stop-color="#00b2f8"/><stop offset=".3" stop-color="#009aec"/><stop offset=".5" stop-color="#0076d8"/><stop offset=".7" stop-color="#0456cc"/><stop offset="1" stop-color="#043ab4"/></linearGradient>
      <radialGradient id="wg" gradientUnits="userSpaceOnUse" cx="1510" cy="480" r="310"><stop offset="0" stop-color="#006aff"/><stop offset=".35" stop-color="#0064fc" stop-opacity=".65"/><stop offset="1" stop-color="#0050d8" stop-opacity="0"/></radialGradient>
      <linearGradient id="wf" x2="0" y2="1"><stop offset="0" stop-color="#fff" stop-opacity="0"/><stop offset=".35" stop-color="#fff"/></linearGradient>
      <linearGradient id="ws" x2="0" y2="1"><stop offset=".62" stop-color="#fff" stop-opacity="0"/><stop offset=".8" stop-color="#fff"/></linearGradient>
      <mask id="wmask"><rect width="1920" height="1080" fill="url(#ws)"/></mask>
      <linearGradient id="wp" x2="1" y2="1"><stop offset="0" stop-color="#26b0ff"/><stop offset="1" stop-color="#209cff"/></linearGradient>
    </defs>
    <rect width="1920" height="1080" fill="url(#wb)"/>
    <rect width="1920" height="1080" fill="url(#wd)" mask="url(#wmask)"/>
    <rect width="1920" height="1080" fill="url(#wg)"/>
    <path d="M0 835 1195 690 1540 738 500 1080H0z" fill="url(#wl)"/>
    <path d="M0 0H228L1540 383 1195 432V690L0 835z" fill="url(#wm)"/>
    <path d="M1540 383 1195 432V690L1540 738z" fill="#007ee8"/>
    <path d="M228 0 1540 383" stroke="#2ab6ff" stroke-opacity=".55" stroke-width="1.800"/>
    <path d="M0 835 1195 690" stroke="#30c4ff" stroke-opacity=".4" stroke-width="1.800"/>
    <path d="M500 1090 1540 738" stroke="#2a9af4" stroke-opacity=".25" stroke-width="1.500"/>
    <g fill="url(#wp)" stroke="#3ee0ff" stroke-width="1.800">
      <path d="M1195.500 432 1342 411.500V557H1195.500z"/><path d="M1349.500 410.500 1540 384V557H1349.500z"/>
      <path d="M1195.500 565.500H1342V710.500L1195.500 690z"/><path d="M1349.500 565.500H1540V738L1349.500 711.500z"/>
    </g>
    <path d="M1195 690 1342 668V710zM1349.500 667 1539 640V737L1349.500 711z" fill="#2890f4" opacity=".7"/>
    <path d="M1195 690 1342 668M1349.500 667 1540 640" stroke="#2cc8ff" stroke-width="2"/>
  </svg>
  <div class="icons">
    <a><svg><use href="#recycle"/></svg>Recycle Bin</a><a><svg><use href="#pdf"/></svg>Morgan<br>Stanley</a><a><svg><use href="#txt"/></svg>Omakin<br>notes</a><a><svg><use href="#pdf"/></svg>TX1607 -<br>Airport Bo...</a><a><svg><use href="#pdf"/></svg>Bank Recs<br>08-20</a>
    <a class="lnk"><svg><use href="#acro"/></svg>Acrobat<br>Reader DC</a><a><svg><use href="#txt"/></svg>Error<br>10-26-20</a><a><svg><use href="#pdf"/></svg>Patient Letter<br>09-23-2020</a><a><svg><use href="#txt"/></svg>updates to<br>templates</a><a></a>
    <a class="lnk"><svg><use href="#adobe"/></svg>Adobe<br>Acrobat ...</a><a><svg><use href="#txt"/></svg>Fax Dr.<br>Sexton</a><a><svg><use href="#pdf"/></svg>Payment<br>Confirmation</a><a><svg><use href="#zip"/></svg>ExportedTe...</a><a></a>
    <a class="lnk"><svg><use href="#cloudx"/></svg>Cloud Login</a><a><svg><use href="#uif"/></svg>If</a><a><svg><use href="#rdp"/></svg>UiPathWin...</a><a></a><a></a>
    <a class="lnk"><svg><use href="#chrome"/></svg>Google<br>Chrome</a><a><svg><use href="#txt"/></svg>JKSK</a><a><svg><use href="#txt"/></svg>Proliant<br>Payroll Hist</a><a><svg><use href="#pdf"/></svg>2051<br>McDonal...</a><a><svg><use href="#pdf"/></svg>TX1813 -<br>Ambrit Cas...</a>
    <a class="lnk"><svg><use href="#knime"/></svg>KNIME<br>Analyti...</a><a><svg><use href="#pdf"/></svg>Keenan 08-28<br>Authorizati...</a><a><svg><use href="#excel"/></svg>ProliantPPP</a><a><svg><use href="#pdf"/></svg>2051<br>McDonal...</a><a><svg><use href="#capture"/></svg>Capture</a>
    <a class="lnk"><svg><use href="#edge"/></svg>Microsoft<br>Edge</a><a><svg><use href="#pdf"/></svg>Keenan STD<br>Claim for...</a><a class="lnk"><svg><use href="#keyhole"/></svg>Send To<br>GoFileRoom</a><a><svg><use href="#pdf"/></svg>2051<br>McDonal...</a><a></a>
    <a class="lnk"><svg><use href="#lastpass"/></svg>My LastPass<br>Vault</a><a><svg><use href="#pdf"/></svg>Keenan STD<br>Claim for...</a><a><svg><use href="#sps"/></svg>SplashtopS...</a><a><svg><use href="#pdf"/></svg>2051<br>McDonal...</a><a></a>
    <a class="lnk"><svg><use href="#paper"/></svg>PaperStream<br>Capture</a><a><svg><use href="#inst"/></svg>KNIME 4.2.1<br>Installer (6...</a><a><svg><use href="#pdf"/></svg>STD Mutual<br>of Omaha ...</a><a><svg><use href="#pdf"/></svg>2051<br>McDonal...</a><a></a>
    <a class="lnk"><svg><use href="#splash2"/></svg>Splashtop<br>Business</a><a class="lnk"><svg><use href="#teams"/></svg>Microsoft<br>Teams</a><a><svg><use href="#txt"/></svg>test</a><a><svg><use href="#pdf"/></svg>2051<br>McDonal...</a><a></a>
  </div>
  <div class="taskbar">
    <a><svg class="w"><use href="#win"/></svg></a>
    <div class="tsearch"><svg class="w"><use href="#mag"/></svg>Type here to search</div>
    <a class="cur"><svg><use href="#chrome"/></svg></a><a><svg><use href="#snip"/></svg></a><a><svg><use href="#printer"/></svg></a><a><svg><use href="#splash"/></svg></a><a><svg><use href="#folder"/></svg></a><a><svg><use href="#uio"/></svg></a><a><svg><use href="#rdp"/></svg></a>
    <a class="open"><svg><use href="#uib"/></svg></a><a class="open"><svg><use href="#notepad"/></svg></a><a class="open"><svg><use href="#gear"/></svg></a><a class="open"><svg><use href="#onenote"/></svg></a><a class="open lit"><svg><use href="#outlook"/></svg></a><a class="open lit"><svg><use href="#redclock"/></svg></a><a class="open"><svg><use href="#uid"/></svg></a>
    <div class="tray">
      <svg viewBox="0 0 24 24"><circle cx="11" cy="12" r="10" fill="#1a94dc" stroke="#fff" stroke-width="1.500"/><text x="11" y="18" class="letter help">?</text><circle cx="19" cy="17" r="5" fill="#e02020"/><path d="M19 14V18M19 19V20.500" stroke="#fff" stroke-width="1.500"/></svg>
      <svg viewBox="0 0 16 16"><path d="M2 11 8 5 14 11" class="ln"/></svg>
      <svg viewBox="0 0 16 16"><path d="M5 5.500H15V12.500H5z" class="ln"/><path d="M7 7.500H13V10.500H7z" fill="#fff"/><path d="M1 3H5V7L3 9V12" class="ln"/></svg>
      <svg viewBox="0 0 16 16"><path d="M2 14A12 12 0 0 1 14 2M6 14A8 8 0 0 1 14 6M10 14A4 4 0 0 1 14 10" class="ln"/></svg>
      <svg viewBox="0 0 16 16"><path d="M1 6H4L8 2V14L4 10H1zM10 5Q12 8 10 11M12 3Q16 8 12 13" class="ln"/></svg>
      <svg viewBox="0 0 16 16"><path d="M3 13A3 3 0 0 1 3 7A5 5 0 0 1 12 6A3.500 3.500 0 0 1 13 13z" fill="#1a86e0"/></svg>
      <div class="clock">10:40 PM<br>1/1/2021</div>
      <svg viewBox="0 0 16 16"><path d="M1 1.500H15V12.500H10L8 15 6 12.500H1z" class="ln"/></svg>
    </div>
  </div>
</section>

<section class="monitor note">
  <div class="titlebar">
    <svg viewBox="0 0 16 16"><circle cx="8" cy="8" r="7"/><path d="M12 8H4M7.500 4.500 4 8 7.500 11.500"/></svg>
    <svg viewBox="0 0 16 16"><path d="M1 1V6H6M1 6Q6 0 11 3Q16 8 8 15"/></svg>
    <svg class="sm" viewBox="0 0 8 8"><path d="M1 1H7M1.500 4 4 6.500 6.500 4"/></svg>
    <span class="doc">Common UiPath&nbsp; -&nbsp; OneNote</span>
    <span class="tsrch"><svg class="w"><use href="#mag"/></svg>Search</span>
    <svg class="circuit" viewBox="0 0 500 34"><g fill="none" stroke="#692c64" stroke-width="3"><circle cx="10" cy="15" r="3.500"/><path d="M14 15H190M200 15 238 34M16 34A14 14 0 0 1 44 34M80 34Q76 28 82 31H180"/><circle cx="282" cy="13" r="26"/><circle cx="282" cy="13" r="15"/><path d="M390 34 400 25H500M450 34 478 0M466 34 494 0"/></g></svg>
    <span class="user">Kenneth Keenan</span>
    <svg class="ava" viewBox="0 0 24 24"><circle cx="12" cy="12" r="12" fill="#d6d4d2"/><circle cx="12" cy="9" r="4" fill="none" stroke="#555"/><path d="M6 19Q7 13 12 13Q17 13 18 19" fill="none" stroke="#555"/></svg>
    <div class="winctl">
      <svg viewBox="0 0 12 10"><path d="M0 .5H12V9.500H0zM0 2.500H12M6 9V4.500M4 6 6 4.500 8 6"/></svg>
      <svg viewBox="0 0 10 10"><path d="M0 5.500H10"/></svg>
      <svg viewBox="0 0 10 10"><path d="M.5 2.500H7.500V9.500H.5zM2.500 2.500V.5H9.500V7.500H7.500"/></svg>
      <svg viewBox="0 0 10 10"><path d="M0 0 10 10M10 0 0 10"/></svg>
    </div>
  </div>
  <div class="menu"><a>File</a><a class="on">Home</a><a>Insert</a><a>Draw</a><a>History</a><a>Review</a><a>View</a><a>Help</a></div>
  <div class="ribbon">
    <div class="group"><div class="gbody clip">
      <a class="big"><svg viewBox="0 0 30 30"><path d="M2 4H24V27H2z" fill="#fff" stroke="#e0962c" stroke-width="2"/><path d="M7 6V3H10Q13 -2 16 3H19V6z" fill="#fff" stroke="#555"/><path d="M15.500 12.500H28.500V29.500H15.500z" fill="#fff" stroke="#444"/></svg>Paste<svg class="chev"><use href="#chev"/></svg></a>
      <div class="cmds"><a class="dis"><svg class="i16" viewBox="0 0 16 16"><path d="M5 0 10 11M11 0 6 11M6 11A2 2 0 1 1 3.500 13M10 11A2 2 0 1 0 12.500 13" fill="none" stroke="#aaa" stroke-width="1.200"/></svg>Cut</a><a class="dis"><svg class="i16" viewBox="0 0 16 16"><path d="M1 1H8V11H1zM5 4H11L14 7V15H5z" fill="#f7f7f7" stroke="#aaa"/></svg>Copy</a><a><svg class="i16" viewBox="0 0 16 16"><path d="M1 7 7 4 11 9 6 15z" fill="#f6c38a" stroke="#d9822b"/><path d="M7 4 10 1 15 3 11 9" fill="#fff" stroke="#444"/></svg>Format Painter</a></div>
    </div><span class="glab">Clipboard</span></div>
    <div class="group"><div class="gbody basic">
      <div class="r1"><span class="combo">Calibri Light<svg class="chev"><use href="#chev"/></svg></span><span class="combo">20<svg class="chev"><use href="#chev"/></svg></span>
        <svg class="i16" viewBox="0 0 16 16"><path d="M6 2.500H16M6 8H16M6 13.500H16" stroke="#444"/><path d="M0 2.500H3M0 8H3M0 13.500H3" stroke="#2b7cd3" stroke-width="3"/></svg><svg class="chev"><use href="#chev"/></svg>
        <svg class="i16" viewBox="0 0 16 16"><path d="M6 2.500H16M6 8H16M6 13.500H16" stroke="#444"/><path d="M2 0V5M1 8H3M2 11V16" stroke="#2b7cd3" stroke-width="1.500"/></svg><svg class="chev"><use href="#chev"/></svg><hr>
        <svg class="i16" viewBox="0 0 16 16"><path d="M1 1.500H15M9 6H15M9 10H15M1 14.500H15M7 8H1M3.500 5.500 1 8 3.500 10.500" fill="none" stroke="#aaa"/></svg><svg class="i16" viewBox="0 0 16 16"><path d="M1 1.500H15M9 6H15M9 10H15M1 14.500H15M1 8H7M4.500 5.500 7 8 4.500 10.500" fill="none" stroke="#aaa"/></svg><hr>
        <svg class="i16" viewBox="0 0 16 16"><path d="M1 13 6 1 10 10M3 9H9" fill="none" stroke="#444" stroke-width="1.200"/><path d="M8 12 12 8 15 11 11 15z" fill="#f3d9f6" stroke="#a33fb5"/></svg></div>
      <div class="r2"><b>B</b><i class="serif">I</i><u>U</u><s>ab</s><span class="subx"><b>x</b><sub>2</sub></span><svg class="chev"><use href="#chev"/></svg><hr>
        <svg class="i16" viewBox="0 0 16 16"><path d="M4 10 11 1 14 3 8 11z" fill="#fff" stroke="#555"/><path d="M0 13.500H16" stroke="#ff0" stroke-width="5"/></svg><svg class="chev"><use href="#chev"/></svg>
        <svg class="i16" viewBox="0 0 16 16"><path d="M3.500 10 8 0 12.500 10M5 7H11" fill="none" stroke="#444" stroke-width="1.200"/><path d="M0 14H16" stroke="#000" stroke-width="4"/></svg><svg class="chev"><use href="#chev"/></svg><hr>
        <svg class="i16" viewBox="0 0 16 16"><path d="M1 2H15M1 6H11M1 10H15M1 14H11" stroke="#444"/></svg><svg class="chev"><use href="#chev"/></svg><hr>
        <svg class="i16" viewBox="0 0 16 16"><path d="M2 2 14 14M14 2 2 14" stroke="#e8504c" stroke-width="1.300"/></svg></div>
    </div><span class="glab">Basic Text</span></div>
    <div class="group"><div class="gbody"><div class="gallery styles"><div class="list"><span class="h1s">Heading 1</span><span class="h2s">Heading 2</span></div><div class="scr"><svg class="up dim"><use href="#chev"/></svg><svg><use href="#chev"/></svg><svg><use href="#chev"/></svg></div></div></div><span class="glab">Styles</span></div>
    <div class="group"><div class="gbody tags"><div class="gallery tg"><div class="list">
        <span><svg class="i16" viewBox="0 0 16 16"><rect x=".5" y=".5" width="15" height="15" fill="#fff" stroke="#2b7cd3"/><path d="M3 8 7 12 13 3" fill="none" stroke="#d03a2e" stroke-width="2"/></svg>To Do (Ctrl+1)</span>
        <span><svg class="i16" viewBox="0 0 16 16"><path d="M8 0 10 6H16L11 9.500 13 16 8 12 3 16 5 9.500 0 6H6z" fill="#ef8433"/></svg>Important (Ctrl+2)</span>
        <span><svg class="i16" viewBox="0 0 16 16"><path d="M4 4Q4 1 8 1Q12 1 12 4Q12 6 8 8V11M8 13V15" fill="none" stroke="#9b3fb5" stroke-width="1.500"/></svg>Question (Ctrl+3)</span></div><div class="scr"><svg class="up dim"><use href="#chev"/></svg><svg><use href="#chev"/></svg><svg><use href="#chev"/></svg></div></div>
      <a class="big"><svg viewBox="0 0 30 30"><rect x="1.500" y="1" width="27" height="27" fill="#fff" stroke="#2b8ad0" stroke-width="1.500"/><path d="M6 14 12 20 24 8" fill="none" stroke="#e8504c" stroke-width="1.500"/></svg>To Do<br>Tag</a>
      <a class="big"><svg viewBox="0 0 30 30"><path d="M2 1H7V6H2zM2 10H7V15H2z" fill="none" stroke="#444" stroke-width="1.300"/><path d="M11 3H28" stroke="#444"/><path d="M5 18 6.500 22H10L7 24 8 28 5 26 2 28 3 24 0 22H3.500z" fill="none" stroke="#e08a2c"/><circle cx="19" cy="18" r="6" fill="none" stroke="#2b8ad0" stroke-width="1.500"/><path d="M23 23 29 29" stroke="#2b8ad0" stroke-width="1.500"/></svg>Find<br>Tags</a>
      <a class="big"><svg viewBox="0 0 30 30"><path d="M6 1V29" stroke="#444" stroke-width="1.500"/><path d="M6 1H18V5H25V17H14V13H6z" fill="#ff8a88" stroke="#d9453f"/></svg>Outlook<br>Tasks <svg class="chev"><use href="#chev"/></svg></a>
    </div><span class="glab">Tags</span></div>
    <div class="group"><div class="gbody one"><a class="big"><svg viewBox="0 0 30 30"><path d="M1 10 15 1 29 10V27H1zM1 10 10 18H20L29 10" fill="#fff" stroke="#444" stroke-width="1.200"/></svg>Email<br>Page</a></div><span class="glab">Email</span></div>
    <div class="group"><div class="gbody one"><a class="big"><svg viewBox="0 0 30 30"><path d="M1 3H27V28H1zM1 8H27M6 0V5M22 0V5" fill="#fff" stroke="#444" stroke-width="1.200"/><path d="M12.500 14.500H29V30H12.500z" fill="#fff" stroke="#444"/><path d="M19 18H27M19 22H27M19 26H27M15 18H17M15 22H17M15 26H17" stroke="#2b8ad0" stroke-width="1.300"/></svg>Meeting<br>Details <svg class="chev"><use href="#chev"/></svg></a></div><span class="glab">Meetings</span></div>
    <svg class="collapse"><use href="#chev"/></svg>
  </div>
  <div class="work">
    <aside class="books">
      <div class="bhead">Notebooks<svg class="i16" viewBox="0 0 16 16"><path d="M5 1H11M6 1V8M10 1V8M3.500 9H12.500M8 9V16" fill="none" stroke="#444" stroke-width="1.200"/></svg></div>
      <a class="pink"><svg class="bk"><use href="#book"/></svg><span>Cmco</span><svg class="chev"><use href="#chev"/></svg></a>
      <a class="pink on"><svg class="bk"><use href="#book"/></svg><span>CMCo UiPath</span><svg class="chev"><use href="#chev"/></svg></a>
      <a class="orange"><svg class="bk"><use href="#book"/></svg><span>Training</span><svg class="chev"><use href="#chev"/></svg></a>
      <div class="quick"><svg class="i16" viewBox="0 0 16 16"><path d="M2 1H14V15H2z" fill="none" stroke="#888"/><path d="M5 5H11M5 8H11" stroke="#888"/></svg>Quick Notes</div>
    </aside>
    <div class="pagewrap">
      <div class="sections"><a class="s1">UiPath</a><a class="s2">Excel Macros</a><a class="s3">Misc</a><a class="s4">Project Plan</a><a class="s5">Orchestrator</a><a class="s6">+</a>
        <span class="nsearch">Search (Ctrl+E)<svg><use href="#mag"/></svg><small>▼</small></span></div>
      <div class="bar"></div>
      <div class="cols">
        <article class="page">
          <svg class="expand" viewBox="0 0 12 12"><path d="M1 11 11 1M7 1H11V5M1 7V11H5" fill="none" stroke="#333"/></svg>
          <h2>Common UiPath</h2>
          <p class="date"><span>Wednesday, November 11, 2020</span><span>8:00 AM</span></p>
          <div class="body">
            <p><b>UiPath Shortcuts</b></p>
            <p class="in">Create Variable: <q>Ctrl+k</q></p>
            <p class="in">Update Activity title: "F2"</p>
            <p>&nbsp;</p>
            <p><b>To Get Variable/Arguments from Queue</b></p>
            <p><q>out_TransactionItem.SpecificContent</q>("<q>FileNumber</q>").<q>ToString</q></p>
            <p>&nbsp;</p>
            <p><b>If Statement</b></p>
            <p>IF(<q>variableName</q>="Test",'<q>ResultIfTrue</q>","<q>ResultIfFalse</q>")</p>
            <p>&nbsp;</p>
            <p><b>For Each/For Each Row</b></p>
            <p><q>variableName</q> = <q>Row.item</q>(0).<q>ToString</q></p>
          </div>
        </article>
        <aside class="pages">
          <div class="add"><svg class="i16" viewBox="0 0 16 16"><path d="M8 0V16M0 8H16" stroke="#444"/></svg>Add Page</div>
          <a class="on">Common UiPath</a><a>For Each Row</a><a>Project: For Each - List of Files</a><a>Get File Names</a><a>String Manipulation</a><a>REGEX</a><a>Orchestrator</a><a>Orchestrator</a><a>Hotkey Shortcuts</a>
        </aside>
      </div>
    </div>
  </div>
  <div class="taskbar">
    <a><svg class="w"><use href="#win"/></svg></a><a><svg class="w"><use href="#mag"/></svg></a>
    <a class="cur"><svg><use href="#chrome"/></svg></a><a><svg><use href="#snip"/></svg></a><a><svg><use href="#printer"/></svg></a><a><svg><use href="#splash"/></svg></a><a><svg><use href="#folder"/></svg></a><a><svg><use href="#uio"/></svg></a><a><svg><use href="#rdp"/></svg></a>
    <a class="open"><svg><use href="#uib"/></svg></a><a class="open"><svg><use href="#notepad"/></svg></a><a class="open"><svg><use href="#gear"/></svg></a><a class="open"><svg><use href="#onenote"/></svg></a><a class="open"><svg><use href="#outlook"/></svg></a><a class="open"><svg><use href="#redclock"/></svg></a><a class="open"><svg><use href="#uid"/></svg></a>
    <div class="clock">10:40 PM<br>1/1/2021</div>
  </div>
</section>
</main>
</body>
</html>
```
FILE: styles.css
```css
* { box-sizing: border-box; }
html, body { margin: 0; background: #000; overflow: hidden; }
p, h1, h2, hr { margin: 0; }
.defs { position: absolute; width: 0; height: 0; }
svg.symbols { display: none; }

.screens {
  zoom: 0.71111;
  display: grid;
  grid-template-columns: repeat(3, 1920px);
  width: 5760px;
  height: 1440px;
  background: #000;
  font: 12px/16px "Open Sans", "Noto Sans", sans-serif;
  letter-spacing: -.035em;
  white-space: nowrap;
}
.monitor { position: relative; display: flex; flex-direction: column; overflow: hidden; }
.monitor.left { height: 1200px; }
.monitor.mid, .monitor.note { margin-top: 360px; height: 1080px; }
.screens svg { display: block; flex: none; }
.i16 { width: 16px; height: 16px; }

/* marks inside icons */
.ui-mark { font: 700 15px "Open Sans", sans-serif; fill: #fff; text-anchor: middle; letter-spacing: 0; }
.ui-mark.big-mark { font-size: 25px; font-weight: 600; }
.letter { font: 700 10px "Open Sans", sans-serif; fill: #fff; text-anchor: middle; }
.letter.help { font-size: 16px; }
.pdf-mark { font: 700 9.5px "Open Sans", sans-serif; fill: #fff; text-anchor: middle; letter-spacing: .5px; }
.pdf-mark, .ui-mark, .letter, .xl-mark, .tm-mark, .cap-mark { text-shadow: none; }
.cap-mark { font: italic 700 8px "Open Sans", sans-serif; fill: #fff; text-anchor: middle; letter-spacing: 0; }
.cap-mark.biz { font-weight: 400; fill: #cfa8e0; }
.xl-mark { font: 700 18px "Open Sans", sans-serif; fill: #fff; text-anchor: middle; }
.tm-mark { font: 700 18px "Open Sans", sans-serif; fill: #fff; text-anchor: middle; }
.q-mark { font: 700 27px "Open Sans", sans-serif; fill: #fff; text-anchor: middle; }

/* browser */
.tabstrip { display: flex; flex: none; height: 34px; padding-left: 8px; background: #dee1e6; color: #45494d; align-items: center; }
.tab { display: flex; align-items: center; gap: 8px; height: 20px; width: 238px; padding: 0 10px; border-right: 1px solid #868b90; }
.tab.active { width: 240px; height: 34px; padding: 0 12px; background: #fff; border: 0; border-radius: 8px 8px 0 0; }
.tab span { flex: 1; }
.tab .x { width: 9px; height: 9px; stroke: #45494d; stroke-width: 1.6; }
.plus { width: 12px; height: 12px; stroke: #333; stroke-width: 1.7; margin-left: 17px; }
.winctl { display: flex; margin-left: auto; margin-bottom: 6px; }
.winctl svg { width: 10px; height: 10px; margin: 0 18px; fill: none; stroke: #000; stroke-width: 1.1; overflow: visible; }
.toolbar {
  display: grid; flex: none; height: 36px; padding-left: 4px; background: #fff; align-items: center; justify-items: center;
  grid-template-columns: 33px 33px 33px 5px 1639px 7px repeat(5, 32px);
}
.toolbar .omni { grid-column: 5; }
.toolbar .ext { grid-column: 7; width: 22px; height: 22px; overflow: visible; }
.nav { width: 15px; height: 15px; fill: none; stroke: #4f5357; stroke-width: 2; }
.nav.faint { stroke: #b8babd; }
.omni { display: flex; align-items: center; width: 100%; height: 28px; padding: 0 9px 0 13px; border-radius: 14px; background: #f1f3f4; font-size: 14px; color: #202124; }
.omni .lock { width: 9px; height: 12px; margin-right: 12px; }
.url { flex: 1; }
.url i { font-style: normal; color: #6a6e73; }
.toolbar .ava { width: 22px; height: 22px; }
.bookmarks {
  display: grid; flex: none; height: 33px; padding: 0 0 5px 13px; background: #fff; border-bottom: 1px solid #c4c7cb; align-items: center; color: #4a4d51;
  grid-template-columns: 68px 127px 127px 75px 154px 154px 154px 153px 154px 599px 140px;
}
.bookmarks a { display: flex; align-items: center; gap: 8px; }
.bookmarks .other { border-left: 1px solid #c4c7cb; padding-left: 11px; }

/* payroll site */
.site {
  display: flex; flex-direction: column; height: 1057px;
  background: linear-gradient(#406788 73px, #2b4f6c 73px, #2b4f6c 274px, #406788 274px);
  font-family: "DejaVu Sans Condensed", "DejaVu Sans", sans-serif; font-stretch: condensed; letter-spacing: -.03em;
}
.sitehead { display: grid; height: 27px; padding-left: 1182px; grid-template-columns: 72px 88px 106px 143px 306px; color: #fff; font-size: 11.5px; }
.sitehead a { display: flex; gap: 7px; align-items: center; height: 21px; }
.company {
  display: flex; gap: 4px; align-items: center; height: 25px; margin-top: 2px; padding: 0 4px 4px 18px;
  background: linear-gradient(#8f8f80, #dedccb); color: #111; font: 700 16.3px "Liberation Sans", sans-serif; letter-spacing: -.01em;
  clip-path: polygon(0 100%, 13px 25%, 22px 0, 303px 0, 100% 4px, 100% 100%);
}
.company b { color: #9c0004; }
.company svg { margin-left: auto; }
.panel {
  display: grid; grid-template-columns: 71px 1795px; width: 1879px; height: 726px; margin-left: 20px; border: 2px solid #fff; border-radius: 5px;
  background: linear-gradient(90deg, #0000001c, #0000 24px, #0000 1855px, #0000001c), linear-gradient(#e7e7e7, #efefef 16px, #fff 44px, #fff 655px, #e8e8e8 705px);
}
.side { display: flex; flex-direction: column; gap: 11px; padding: 27px 0 0 4px; font-size: 10.5px; color: #333; }
.side a { display: flex; flex-direction: column; align-items: center; justify-content: space-between; width: 57px; height: 67px; padding: 3px 0 1px; border: 1px solid #bbb; border-radius: 5px; background: #fbfbfb; line-height: 15px; }
.side svg { width: 46px; height: 47px; }
.side .on { background: linear-gradient(#8c9cac, #2d5272 55%, #1d3f5d); border-color: #1d3f5d; color: #fff; font-weight: 700; }
.content { display: flex; flex-direction: column; }
.subtabs { display: grid; grid-template-columns: 93px 59px 89px 60px 75px 96px 80px; column-gap: 2.6px; height: 21px; margin: 11px 0 0 4px; text-align: center; color: #0b0b62; line-height: 20px; }
.subtabs a { border: 1px solid #aaa; border-bottom: 0; border-radius: 5px 5px 0 0; background: linear-gradient(#ececec 45%, #d2d2d2 50%, #d8d8d8); }
.subtabs .on { background: linear-gradient(#3e6a8c, #17405f); color: #fff; }
.frame { height: 441px; padding: 13px 10px 0; background: #d8d8d8; border-top: 1px solid #fff; border-radius: 0 4px 4px 4px; }
.sheet { position: relative; display: flex; flex-direction: column; align-items: center; height: 334px; padding-top: 3px; background: #eee; border: 1px solid #8f8f8f; border-radius: 0 0 5px 5px; }
.history { position: absolute; left: 1685px; top: 1px; width: 20px; height: 20px; }
.sheet h1 { font: 700 16px/18px "Liberation Sans", sans-serif; letter-spacing: 0; color: #1c4461; margin-bottom: 5px; }
.btns { display: grid; grid-template-columns: 47px 70px 64px 58px; height: 21px; }
.btns button { padding: 0; border: 1px solid #767676; border-radius: 3px; background: #efefef; font: 13.3px "Liberation Sans", sans-serif; letter-spacing: 0; }
.grid { width: 700px; height: 56px; margin: 2px 0 5px; border: 1px solid #bbb; font-size: 11px; }
.finder { display: grid; grid-template-columns: 238px 38px 45px 84px 80px 20px; align-items: center; height: 18px; background: linear-gradient(#e9e9e9, #d2d2d2); font-size: 10px; }
.finder i { text-align: right; padding-right: 3px; }
.finder i:nth-of-type(2) { border-left: 1px solid #333; margin-left: 3px; }
.sel { display: flex; justify-content: space-between; align-items: center; height: 16px; margin-right: 1px; padding: 0 3px; border: 1px solid #767676; border-radius: 2px; background: #fff; }
.sel svg { width: 9px; height: 9px; color: #000; }
.find { display: flex; justify-content: space-between; height: 18px; margin: 0 1px 0 2px; padding-left: 1px; border: 2px solid #222; border-right-color: #777; border-bottom-color: #777; background: #fff; line-height: 14px; }
.find em { width: 16px; height: 14px; background: #777; color: #fff; font: 700 9px/14px "Liberation Sans", sans-serif; text-align: center; }
.row { display: grid; grid-template-columns: 174px 208px 129px 138px 49px; }
.row > * + * { border-left: 1px solid #b5b5b5; }
.head { height: 16px; border-top: 1px solid #bbb; background: linear-gradient(#ececec, #d4d4d4); font-weight: 700; text-align: center; line-height: 14px; }
.head small { color: #999; font-size: 9px; }
.data { height: 20px; background: #f0f2ac; border-top: 1px solid #bbb; color: #0000e8; line-height: 20px; }
.data > * { padding-left: 2px; }
.acts { display: flex; gap: 4px; }
.formtab { width: 700px; height: 23px; padding-left: 2px; background: radial-gradient(ellipse at 45% 50%, #173b56 55%, #34597a); background-size: 303px 23px; background-repeat: no-repeat; clip-path: polygon(0 5px, 4px 0, 278px 0, 285px 4px, 303px 100%, 0 100%); color: #fff; font-weight: 700; line-height: 23px; }
.form {
  display: grid; grid-template-columns: 125px 243px 67px 243px; grid-template-rows: 22px 22px 70px; gap: 6px 0; width: 700px; height: 155px; padding-top: 12px; margin-bottom: 2px;
  background: #d9d9d9; border: 1px solid #969696; border-radius: 0 7px 7px 7px; font-size: 13px; color: #222; align-items: center;
}
.form label { text-align: right; padding-right: 7px; }
.field { display: flex; align-items: center; height: 22px; padding-left: 3px; background: #fff; border: 1px solid #767676; border-radius: 2px; }
.field.off { background: #ebebeb; border-color: #bbb; }
.area { grid-column: 2 / 5; width: 513px; height: 70px; align-items: flex-end; justify-content: flex-end; }
.area svg { width: 8px; height: 8px; margin: 1px; }
.dock { display: grid; grid-template-columns: 37px 72px 72px 92px 1fr 80px 80px; padding: 10px 8px 0 0; font-size: 10.5px; color: #333; text-align: center; }
.dock svg { width: 36px; height: 36px; margin: 0 auto -2px; }
.foot { margin-top: 18px; color: #fff; text-align: center; font: 9.6px/11px "Liberation Sans", sans-serif; letter-spacing: 0; }

/* taskbar */
.taskbar { position: relative; display: flex; flex: none; height: 40px; margin-top: auto; background: linear-gradient(90deg, #22363c, #21343f 55%, #1b2944 80%, #1a2440); color: #fff; z-index: 1; }
.taskbar > a { display: flex; align-items: center; justify-content: center; width: 48px; margin-right: 1px; }
.taskbar > a svg { width: 24px; height: 24px; }
.taskbar svg.w { width: 16px; height: 16px; }
.taskbar .cur { background: #4b5c62; border-bottom: 2px solid #76b9ed; }
.taskbar .open { background: linear-gradient(#76b9ed, #76b9ed) 4px 100% / 40px 2px no-repeat; }
.taskbar .lit { background-color: #34474f; }
.clock { width: 56px; margin-left: auto; padding-top: 2px; text-align: center; line-height: 18px; }
.tsearch { display: flex; align-items: center; gap: 11px; width: 344px; margin: 1px 23px 0 -1px; padding-left: 12px; background: #f2f2f2; border: 1px solid #aaa; color: #444; font-size: 15px; }
.tray { display: grid; grid-template-columns: 34px 30px 28px 24px 20px 20px 48px 40px; margin-left: auto; padding-right: 13px; align-items: center; justify-items: center; }
.tray svg { width: 16px; height: 16px; }
.tray svg:first-child { width: 24px; height: 24px; }
.tray .ln { fill: none; stroke: #fff; stroke-width: 1.1; }
.tray .clock { margin: 0; padding: 0; width: 48px; }

/* desktop */
.wallpaper { position: absolute; inset: 0; width: 1920px; height: 1080px; }
.icons { position: relative; display: grid; grid-template-columns: repeat(5, 76px); grid-template-rows: repeat(10, 102px); color: #fff; line-height: 15px; text-align: center; text-shadow: 0 1px 2px #000, 1px 1px 2px #000; letter-spacing: -.02em; }
.icons a { position: relative; padding-top: 7px; }
.icons svg { width: 48px; height: 48px; margin: 0 auto 4px; }
.icons .lnk::after { content: ""; position: absolute; left: 14px; top: 42px; width: 12px; height: 12px; border: 1px solid #b8bec8; background: linear-gradient(45deg, #f3f6fa 20%, #2a5aa8 25% 70%, #f3f6fa 72%); }

/* notes app */
.titlebar {
  position: relative; display: grid; height: 34px; background: #80397b; color: #f4e6f2; align-items: center; justify-items: center; flex: none;
  grid-template-columns: 15px 26px 4px 26px 4px 22px 268px 155px 267px 366px 450px 86px 46px 185px;
}
.titlebar > svg { width: 16px; height: 16px; fill: none; stroke: #e2c6de; stroke-width: 1.1; position: relative; }
.titlebar > svg:nth-of-type(1) { grid-column: 2; }
.titlebar > svg:nth-of-type(2) { grid-column: 4; }
.titlebar > svg.sm { grid-column: 6; width: 9px; height: 9px; }
.doc { grid-column: 8; }
.tsrch { grid-column: 10; display: flex; align-items: center; gap: 14px; width: 366px; height: 22px; padding-left: 18px; background: #f6deef; color: #80397b; }
.tsrch svg { width: 16px; height: 16px; }
.titlebar > svg.circuit { position: absolute; left: 1420px; top: 0; width: 500px; height: 34px; stroke: none; }
.user { grid-column: 12; position: relative; }
.titlebar > svg.ava { grid-column: 13; width: 24px; height: 24px; }
.titlebar .winctl { grid-column: 14; position: relative; margin: 0; }
.titlebar .winctl svg { stroke: #fff; }
.menu { display: grid; flex: none; grid-template-columns: 51px 65px 61px 60px 71px 68px 55px 60px; height: 32px; padding-left: 17px; background: #f7f7f7; font-size: 13px; line-height: 32px; color: #444; }
.menu .on { justify-self: start; color: #222; height: 28px; border-bottom: 3px solid #80397b; }
.ribbon { position: relative; display: grid; flex: none; grid-template-columns: 164px 306px 151px 313px 57px 68px; height: 95px; padding-top: 2px; background: #f7f7f7; border-bottom: 1px solid #d2d0c8; color: #444; }
.group { display: flex; flex-direction: column; height: 88px; border-right: 1px solid #c2c2c2; }
.gbody { height: 76px; display: flex; flex: none; align-items: flex-start; }
.glab { text-align: center; line-height: 16px; font-size: 11.5px; }
.chev { width: 8px; height: 8px; }
.big { display: block; text-align: center; line-height: 16px; padding-top: 4px; }
.big > svg:first-child { width: 30px; height: 30px; margin: 0 auto 3px; }
.screens .big .chev { display: inline-block; margin: 0; }
.clip .big { width: 46px; margin: 0 0 0 6px; }
.screens .clip .big .chev { display: block; margin: 4px auto 0; }
.cmds { display: grid; grid-template-rows: repeat(3, 23.5px); margin-top: -1px; }
.cmds a { display: flex; align-items: center; gap: 3px; }
.dis { color: #a8a8a8; }
.basic { flex-direction: column; gap: 10px; padding: 8px 0 0 9px; }
.r1, .r2 { display: grid; height: 22px; align-items: center; justify-items: center; justify-content: start; }
.r1 { grid-template-columns: 85px 45px 24px 11px 25px 12px 13px 21px 22px 9px 22px; }
.r2 { grid-template-columns: 22px 22px 21px 22px 24px 12px 12px 21px 12px 25px 12px 13px 20px 11px 12px 24px; font-size: 14px; }
.r1 hr, .r2 hr { width: 1px; height: 20px; border: 0; background: #c8c8c8; }
.combo { display: flex; align-items: center; justify-content: space-between; width: 100%; height: 22px; padding: 0 2px 0 3px; border: 1px solid #bbb; background: #fff; color: #222; }
.serif { font-family: "Liberation Serif", serif; }
.subx { display: flex; align-items: flex-end; }
.r2 sub { font-size: 8px; line-height: 9px; color: #2b7cd3; }
.gallery { display: grid; height: 61px; margin-top: 2px; background: #fff; border: 1px solid #c8c8c8; }
.styles { grid-template-columns: 116px 13px; width: 131px; margin-left: 9px; }
.tg { grid-template-columns: 144px 14px; width: 160px; margin: 2px 3px 0 10px; color: #222; }
.list { display: grid; height: 59px; align-items: center; }
.tg .list span { display: flex; align-items: center; gap: 10px; padding-left: 3px; }
.h1s, .h2s { padding-left: 4px; font: 19px/24px Lato, sans-serif; letter-spacing: .01em; color: #1f4e79; }
.h2s { font-size: 17px; color: #2e75b5; }
.scr { height: 59px; border-left: 1px solid #bbb; }
.scr svg { width: 100%; height: 19.6px; padding: 6px 2px; border-bottom: 1px solid #ccc; }
.up { transform: scaleY(-1); }
.dim { color: #aaa; }
.tags .big:nth-child(2), .tags .big:nth-child(3) { width: 42px; }
.tags .big:nth-child(4) { width: 48px; }
.one { justify-content: center; }
.collapse { position: absolute; left: 1902px; top: 83px; width: 11px; height: 11px; transform: scaleY(-1); }

.work { display: grid; grid-template-columns: 190px 1730px; height: 879px; background: #fff; }
.books { display: flex; flex-direction: column; padding: 14px 4px 0 5px; border-right: 1px solid #c0c0c0; background: linear-gradient(#fff 462px, #f6f6f6 462px); color: #444; }
.bhead { display: flex; justify-content: space-between; align-items: center; height: 25px; padding: 0 5px 0 3px; border-bottom: 1px solid #d8d8d8; font-size: 18px; }
.books a { display: flex; align-items: center; height: 42px; padding: 0 8px 0 3px; font-size: 15px; }
.books a span { flex: 1; margin-left: 9px; color: #444; }
.books a .chev { color: #555; }
.books .on { background: #e6e6e6; }
.bk { width: 24px; height: 28px; }
.pink { color: #f6abab; }
.orange { color: #f5b26b; }
.quick { display: flex; gap: 8px; align-items: center; margin: auto 0 7px 11px; height: 20px; color: #555; }
.sections { display: flex; align-items: flex-end; height: 38px; padding: 0 5px 0 6px; color: #444; line-height: 21px; text-align: center; }
.sections a { height: 21px; clip-path: polygon(0 100%, 2px 5px, 6px 0, calc(100% - 8px) 0, calc(100% - 5px) 4px, 100% 100%); padding-right: 3px; }
.sections .s1 { width: 65px; height: 26px; line-height: 26px; background: #9bc3e6; }
.s2 { width: 97px; background: #f6b0b0; }
.s3 { width: 57px; background: #f6aad6; }
.s4 { width: 91px; background: #8fb5e3; }
.s5 { width: 97px; background: #98d6dc; }
.sections .s6 { width: 36px; clip-path: none; height: 19px; line-height: 18px; border: 1px solid #bbb; border-bottom: 0; border-radius: 5px 5px 0 0; font-size: 15px; }
.nsearch { display: flex; align-items: center; width: 191px; height: 20px; margin: 0 0 5px auto; padding: 0 3px; border: 1px solid #aaa; color: #666; }
.nsearch svg { width: 15px; height: 15px; margin-left: auto; color: #333; }
.nsearch small { font-size: 7px; color: #222; margin-left: 2px; }
.bar { height: 6px; background: #9bc3e6; border-top: 1px solid #86b4ea; }
.cols { display: grid; grid-template-columns: 1412px 318px; height: 835px; }
.page { position: relative; padding: 24px 0 0 60px; font-family: Lato, sans-serif; color: #111; letter-spacing: 0; }
.expand { position: absolute; left: 1387px; top: 13px; width: 12px; height: 12px; }
.page h2 { width: 360px; height: 44px; margin-left: -16px; padding-left: 16px; border-bottom: 1px solid #dcdcdc; font: 300 31px/38px Lato, sans-serif; color: #000; }
.date { display: flex; gap: 38px; height: 26px; font-size: 15.5px; line-height: 27px; color: #767676; }
.body { padding-top: 50px; font-size: 17px; line-height: 22.36px; color: #000; }
.body .in { padding-left: 45px; }
q { quotes: none; text-decoration: underline wavy #e33 1px; text-underline-offset: 2px; }
.pages { background: #e7f0f8; border-left: 1px solid #b5c2ce; color: #4c5258; }
.add { display: flex; gap: 6px; align-items: center; height: 27px; margin-bottom: 10px; padding: 0 0 5px 11px; background: #9bc5e8; margin-left: -1px; }
.pages a { display: block; height: 22px; padding-left: 13px; line-height: 22px; }
.pages .on { width: 313px; margin-left: -1px; background: #fff; border: 1px solid #9bc3e6; border-left: 0; line-height: 20px; }
```
